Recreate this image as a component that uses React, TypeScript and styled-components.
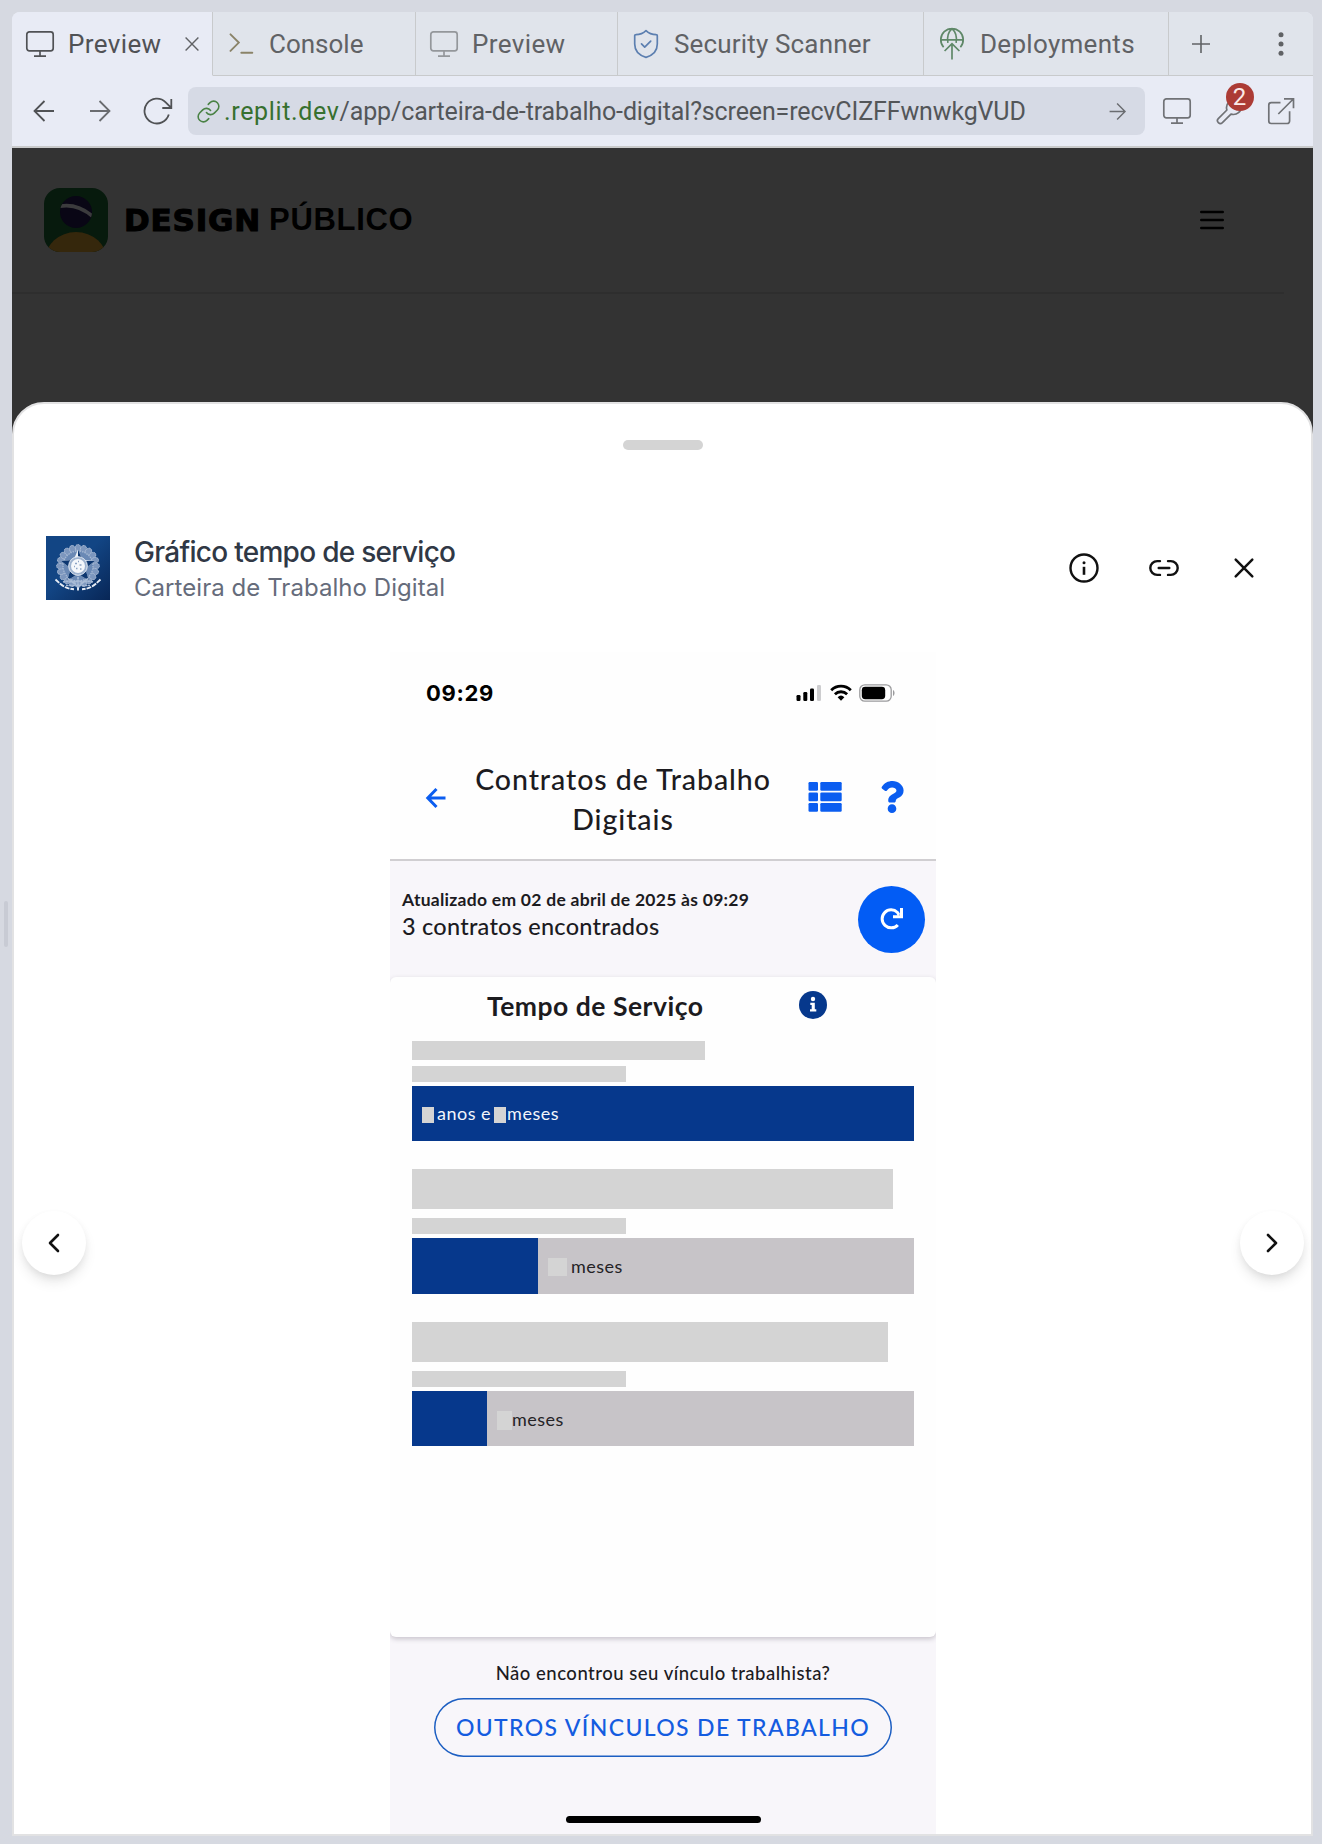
import React from 'react';
import styled, { createGlobalStyle } from 'styled-components';
import { FaQuestion } from 'react-icons/fa';

const Global = createGlobalStyle`
  *, *::before, *::after { box-sizing: border-box; }
  body { margin: 0; background: #d6d9e1; font-family: Inter, "Liberation Sans", sans-serif; }
  svg { display: block; flex: none; }
`;

/* ---------- workspace pane ---------- */

const Workspace = styled.div`
  display: flex;
  width: 1322px;
  height: 1844px;
  padding: 12px 9px 8px 0;
  background: #d6d9e1;
`;

const Gutter = styled.div`
  display: flex;
  align-items: center;
  justify-content: flex-end;
  width: 12px;
  padding: 0 4px 0 0;
`;

const Grip = styled.div`
  width: 4px;
  height: 46px;
  border-radius: 2px;
  background: #c8cbd4;
`;

const Pane = styled.div`
  display: flex;
  flex-direction: column;
  width: 1301px;
  height: 1824px;
  overflow: hidden;
  border-radius: 8px 8px 0 0;
  background: #e8ebf5;
`;

const TabBar = styled.div`
  display: flex;
  height: 64px;
`;

const Tab = styled.div<{ $width: number; $active?: boolean }>`
  display: flex;
  align-items: center;
  width: ${p => p.$width}px;
  padding-left: 13px;
  background: ${p => (p.$active ? '#e8ebf5' : '#e0e4eb')};
  border-right: 1px solid #c8cacc;
  border-bottom: 1px solid ${p => (p.$active ? 'transparent' : '#c8cacc')};
  color: ${p => (p.$active ? '#505255' : '#606265')};
`;

const TabIcon = styled.span`
  display: flex;
  justify-content: center;
  width: 30px;
`;

const TabLabel = styled.span<{ $spacing: number }>`
  flex: 1;
  padding-left: 13px;
  font: 400 26px/32px Roboto, sans-serif;
  letter-spacing: ${p => p.$spacing}px;
  white-space: nowrap;
`;

const TabClose = styled.span`
  padding-right: 13px;
`;

const TabActions = styled.div`
  display: flex;
  flex: 1;
  align-items: center;
  justify-content: space-between;
  padding: 0 28px 0 23px;
  background: #e0e4eb;
  border-bottom: 1px solid #c8cacc;
`;

const Toolbar = styled.div`
  display: flex;
  align-items: center;
  height: 72px;
  padding: 0 18px 0 20px;
  border-bottom: 2px solid #c9cacb;
`;

const NavButtons = styled.div`
  display: flex;
  align-items: center;
  gap: 32px;
  width: 156px;
`;

const Reload = styled.span`
  margin-left: -1px;
`;

const AddressBar = styled.div`
  display: flex;
  align-items: center;
  width: 957px;
  height: 48px;
  padding: 0 18px 0 8px;
  border-radius: 8px;
  background: #d6dae5;
`;

const Address = styled.span`
  flex: 1;
  padding: 2px 0 0 3px;
  font: 400 25px/32px Roboto, sans-serif;
  letter-spacing: -0.13px;
  color: #535659;
  white-space: nowrap;
`;

const Host = styled.span`
  letter-spacing: 0.65px;
  color: #37702f;
`;

const ToolIcons = styled.div`
  display: flex;
  flex: 1;
  align-items: center;
  justify-content: space-between;
  padding-left: 17px;
`;

const BadgeHolder = styled.span`
  position: relative;
`;

const Badge = styled.span`
  position: absolute;
  top: -14px;
  left: 10px;
  width: 28px;
  height: 28px;
  border-radius: 14px;
  background: #ac3b35;
  color: #fbe9e7;
  font: 400 24px/29px Roboto, sans-serif;
  text-align: center;
`;

/* ---------- page behind the sheet ---------- */

const Viewport = styled.div`
  flex: 1;
  background: #333;
`;

const SiteHeader = styled.header`
  display: flex;
  align-items: center;
  width: 1272px;
  height: 146px;
  padding: 0 60px 0 32px;
  border-bottom: 2px solid #2e2e2e;
`;

const Wordmark = styled.div`
  display: flex;
  flex: 1;
  padding-left: 16px;
  color: #000;
  white-space: nowrap;
`;

const WordHeavy = styled.span`
  width: 145px;
  font: 700 31px/40px "DejaVu Sans", sans-serif;
  letter-spacing: 0.8px;
  -webkit-text-stroke: 1.1px #000;
`;

const WordBold = styled.span`
  font: 700 31px/39px "Liberation Sans", sans-serif;
  letter-spacing: 0.7px;
`;

/* ---------- sheet ---------- */

const Sheet = styled.section`
  display: flex;
  flex-direction: column;
  align-items: center;
  height: 1434px;
  margin-top: 108px;
  border: 2px solid #e2e2e3;
  border-radius: 32px 32px 0 0;
  background: #fff;
`;

const DragHandle = styled.div`
  width: 80px;
  height: 10px;
  margin-top: 36px;
  border-radius: 5px;
  background: #d4d4d4;
`;

const SheetHeader = styled.div`
  display: flex;
  align-self: stretch;
  align-items: center;
  height: 64px;
  margin-top: 86px;
  padding: 0 51px 0 32px;
`;

const SheetTitles = styled.div`
  flex: 1;
  padding: 0 0 0 24px;
  margin-top: 5px;
`;

const SheetTitle = styled.h1`
  margin: 0;
  font: 500 28px/35px Inter, sans-serif;
  letter-spacing: -0.71px;
  color: #303845;
`;

const SheetSubtitle = styled.p`
  margin: 0;
  font: 400 24px/36px Inter, sans-serif;
  letter-spacing: 0.05px;
  color: #666c7b;
`;

const SheetActions = styled.div`
  display: flex;
  align-items: center;
  gap: 48px;
`;

const Carousel = styled.div`
  display: flex;
  align-self: stretch;
  justify-content: space-between;
  margin-top: 52px;
  padding: 0 7px 0 8px;
`;

const RoundButton = styled.button`
  display: flex;
  align-items: center;
  justify-content: center;
  width: 64px;
  height: 64px;
  margin-top: 559px;
  padding: 0;
  border: 0;
  border-radius: 50%;
  background: #fff;
  box-shadow: 0 8px 14px -2px rgba(0, 0, 0, 0.11), 0 3px 8px -2px rgba(0, 0, 0, 0.08);
`;

/* ---------- phone capture ---------- */

const Phone = styled.article`
  display: flex;
  flex-direction: column;
  width: 546px;
  height: 1182px;
  overflow: hidden;
  background: #fefefe;
  color: #1c1b1f;
  font-family: Lato, sans-serif;
`;

const StatusBar = styled.div`
  display: flex;
  align-items: center;
  height: 82px;
  padding: 0 40px 0 36px;
`;

const Clock = styled.span`
  flex: 1;
  font: 700 22px/28px Inter, sans-serif;
  letter-spacing: 0.65px;
  color: #000;
`;

const StatusIcons = styled.div`
  display: flex;
  align-items: center;
  gap: 7.5px;
`;

const PhoneNav = styled.div`
  display: flex;
  align-items: center;
  height: 127px;
  padding: 3px 32px 0 35px;
  border-bottom: 2px solid #d0ced1;
`;

const PhoneTitle = styled.h2`
  width: 352px;
  margin: 0;
  padding-top: 2px;
  font: 500 28.5px/40px Lato, sans-serif;
  letter-spacing: 0.92px;
  text-align: center;
  color: #1c1b1f;
`;

const PhoneNavIcons = styled.div`
  display: flex;
  flex: 1;
  align-items: center;
  justify-content: space-between;
  padding: 0 0 3px 9px;
`;

const UpdateStrip = styled.div`
  display: flex;
  align-items: center;
  justify-content: space-between;
  height: 116px;
  padding: 0 11px;
  background: #f8f6fa;
`;

const UpdateText = styled.div`
  padding: 0 0 13px 1px;
`;

const Updated = styled.p`
  margin: 0;
  font: 700 17.5px/27px Lato, sans-serif;
  letter-spacing: 0.27px;
`;

const Found = styled.p`
  margin: 0;
  font: 500 23.5px/27px Lato, sans-serif;
  letter-spacing: 0.24px;
`;

const RefreshButton = styled.button`
  display: flex;
  align-items: center;
  justify-content: center;
  width: 67px;
  height: 67px;
  padding: 0;
  border: 0;
  border-radius: 50%;
  background: #025cf5;
`;

const LowerArea = styled.div`
  flex: 1;
  background: #f8f6fa;
`;

const Card = styled.div`
  height: 660px;
  padding: 12px 22px 0;
  border-radius: 6px;
  background: #fefefe;
  box-shadow: 0 2px 5px rgba(60, 50, 70, 0.26);
`;

const CardHeading = styled.div`
  display: flex;
  align-items: center;
  height: 32px;
  margin-bottom: 20px;
  padding-left: 75px;
`;

const CardTitle = styled.h3`
  width: 312px;
  margin: 0;
  font: 700 26.5px/32px Lato, sans-serif;
  letter-spacing: 0.5px;
  padding-top: 2px;
`;

const Contract = styled.div`
  margin-bottom: 28.4px;
`;

const Redacted = styled.div<{ $w: number; $h: number; $gap: number }>`
  width: ${p => p.$w}px;
  height: ${p => p.$h}px;
  margin-bottom: ${p => p.$gap}px;
  background: #d4d4d4;
`;

const Bar = styled.div`
  display: flex;
  align-items: stretch;
  width: 502px;
  height: 55.3px;
  background: #c7c4c8;
  color: #242226;
`;

const BarFill = styled.div<{ $w: number }>`
  display: flex;
  width: ${p => p.$w}px;
  background: #06388c;
  color: #f2f5fb;
`;

const BarLabel = styled.div`
  display: flex;
  align-items: center;
  padding-left: 10px;
  font: 400 18px/24px Lato, sans-serif;
  letter-spacing: 0.5px;
  white-space: nowrap;
`;

const Blank = styled.span<{ $w: number; $h: number; $left?: number; $right: number }>`
  width: ${p => p.$w}px;
  height: ${p => p.$h}px;
  margin: 3px ${p => p.$right}px 0 ${p => p.$left ?? 0}px;
  background: #d4d4d4;
`;

const Footer = styled.div`
  display: flex;
  flex-direction: column;
  align-items: center;
  padding-top: 24px;
`;

const Question = styled.p`
  margin: 0 0 13px;
  font: 500 18.5px/24px Lato, sans-serif;
  letter-spacing: 0.5px;
`;

const OutlineButton = styled.button`
  width: 458px;
  height: 59px;
  padding: 0;
  border: 0;
  border-radius: 30px;
  background: transparent;
  box-shadow: inset 0 0 0 1.5px #1d5fc2;
  color: #145ce0;
  font: 500 23px/57px Lato, sans-serif;
  letter-spacing: 1.36px;
  white-space: nowrap;
`;

const HomeIndicator = styled.div`
  width: 195px;
  height: 7px;
  margin-top: 59px;
  border-radius: 4px;
  background: #000;
`;

/* ---------- icons ---------- */

const MonitorIcon = ({ color }: { color: string }) => (
  <svg width="30" height="28" viewBox="0 0 30 28" fill="none" stroke={color} strokeWidth="1.7">
    <rect x="1.8" y="1.8" width="26.4" height="19" rx="2.6" />
    <path d="M15 21v5M9 26.2h12" />
  </svg>
);

const CrossIcon = () => (
  <svg width="14" height="14" viewBox="0 0 14 14" stroke="#606265" strokeWidth="1.4">
    <path d="M0.6 0.6l12.8 12.8M13.4 0.6L0.6 13.4" />
  </svg>
);

const ConsoleIcon = () => (
  <svg width="26" height="22" viewBox="0 0 26 22" fill="none" stroke="#8a8368" strokeWidth="1.9" strokeLinecap="round">
    <path d="M2.5 1.3l8.300 8.300-8.300 8.300M13.300 19.800h11" />
  </svg>
);

const ShieldIcon = () => (
  <svg width="26" height="30" viewBox="0 0 26 30" fill="none" stroke="#5c7fb0" strokeWidth="1.7" strokeLinejoin="round" strokeLinecap="round">
    <path d="M13 1.6c-2.6 2.6-6 4-10.2 4.1-.8 0-1.1.4-1.1 1.1v8.3c0 6.700 4.400 11.300 11.300 13.300 6.900-2 11.300-6.600 11.300-13.300V6.800c0-.7-.3-1.100-1.100-1.100C19 5.600 15.600 4.200 13 1.600z" />
    <path d="M8.500 14.900l3.200 3.200 6-6" />
  </svg>
);

const DeployIcon = () => (
  <svg width="26" height="34" viewBox="0 0 26 34" fill="none" stroke="#5f8868" strokeWidth="1.7">
    <path d="M4.600 20.200A11.200 11.200 0 1 1 21.400 20.200M1.800 12.800h22.400M8.900 15.800c-1-5.600.5-11 4.100-14.200 3.600 3.200 5.100 8.600 4.100 14.200M13 32.500V17M5.600 24L13 16.600l7.400 7.400" />
  </svg>
);

const PlusIcon = () => (
  <svg width="18" height="18" viewBox="0 0 18 18" stroke="#606265" strokeWidth="1.6">
    <path d="M0 9h18M9 0v18" />
  </svg>
);

const DotsIcon = () => (
  <svg width="8" height="26" viewBox="0 0 8 26" fill="#606265">
    <circle cx="4" cy="3.700" r="2.500" />
    <circle cx="4" cy="13" r="2.500" />
    <circle cx="4" cy="22.300" r="2.500" />
  </svg>
);

const ArrowIcon = ({ size, color, flip }: { size: number; color: string; flip?: boolean }) => (
  <svg width={size} height={size} viewBox="0 0 24 24" fill="none" stroke={color} strokeWidth="1.8">
    <path d={flip ? 'M22 12H2.500M12.500 2L2.500 12l10 10' : 'M2 12h19.500M11.500 2l10 10-10 10'} />
  </svg>
);

const ReloadIcon = () => (
  <svg width="30" height="28" viewBox="0 0 30 28" fill="none" stroke="#505255" strokeWidth="1.8">
    <path d="M25.800 17.600A12.400 12.400 0 1 1 22.700 5.300L28 10.600M28.300 2v9h-9" />
  </svg>
);

const ChainIcon = () => (
  <svg width="25" height="25" viewBox="0 0 24 24" fill="none" stroke="#4a8245" strokeWidth="1.5" strokeLinecap="round">
    <path d="M10 13a5 5 0 0 0 7.540.540l3-3a5 5 0 0 0-7.070-7.070l-1.720 1.710M14 11a5 5 0 0 0-7.540-.540l-3 3a5 5 0 0 0 7.070 7.070l1.710-1.710" />
  </svg>
);

const WrenchIcon = () => (
  <svg width="28" height="28" viewBox="0 0 28 28" fill="none" stroke="#707276" strokeWidth="1.7" strokeLinejoin="round">
    <path d="M25.300 8.400a8 8 0 0 1-10.300 8.700l-8.600 8.600a2.900 2.900 0 0 1-4.100-4.100l8.600-8.600A8 8 0 0 1 20.500 2.900l-4.600 4.600 4.600 4.800z" />
  </svg>
);

const ExternalIcon = () => (
  <svg width="28" height="28" viewBox="0 0 28 28" fill="none" stroke="#707276" strokeWidth="1.700">
    <path d="M13.500 5.700H4.200a2.400 2.400 0 0 0-2.400 2.400v16a2.400 2.400 0 0 0 2.400 2.400h16a2.400 2.400 0 0 0 2.400-2.400v-9.800M11.300 17L26.300 2M17 1.800h9.500v9.500" />
  </svg>
);

const SiteLogo = () => (
  <svg width="64" height="64" viewBox="0 0 64 64">
    <defs>
      <clipPath id="tile"><rect width="64" height="64" rx="16" /></clipPath>
      <clipPath id="globe"><circle cx="32" cy="24" r="16" /></clipPath>
    </defs>
    <g clipPath="url(#tile)">
      <rect width="64" height="64" fill="#071a0d" />
      <circle cx="32" cy="24" r="16" fill="#090615" />
      <path clipPath="url(#globe)" d="M14 18.600C27 15.500 39 19.500 50 29.500" fill="none" stroke="#3b3b3d" strokeWidth="3.600" />
      <ellipse cx="32" cy="72" rx="31" ry="28" fill="#35270c" />
    </g>
  </svg>
);

const MenuIcon = () => (
  <svg width="24" height="20" viewBox="0 0 24 20" stroke="#000" strokeWidth="2.600" strokeLinecap="round">
    <path d="M1.300 2h21.400M1.300 10h21.400M1.300 18h21.400" />
  </svg>
);

const petals = Array.from({ length: 20 }, (_, i) => (i * Math.PI) / 10);

const CoatOfArms = () => (
  <svg width="64" height="64" viewBox="0 0 64 64">
    <defs>
      <linearGradient id="field" x1="0" y1="0" x2="1" y2="1">
        <stop offset="0.450" stopColor="#124584" />
        <stop offset="1" stopColor="#082656" />
      </linearGradient>
    </defs>
    <rect width="64" height="64" fill="url(#field)" />
    {petals.map(a => (
      <ellipse
        key={a}
        cx={32 + 17.500 * Math.sin(a)}
        cy={30 - 17.500 * Math.cos(a)}
        rx="3"
        ry="4"
        fill="#7d97be"
        stroke="#b4c3da"
        strokeWidth="0.800"
        strokeDasharray="1.500 0.500"
        transform={`rotate(${(a * 180) / Math.PI} ${32 + 17.500 * Math.sin(a)} ${30 - 17.500 * Math.cos(a)})`}
      />
    ))}
    <circle cx="32" cy="30" r="15" fill="#6a89b5" stroke="#a5b8d3" strokeWidth="1.300" strokeDasharray="1.400 1" />
    <path d="M32 13.500l4.400 10.400 12.400 1-9.600 7.700 3.700 11.900-10.900-6.500-10.900 6.500 3.700-11.900-9.600-7.700 12.400-1z" fill="#edf2f8" />
    <path d="M32 13.500v11l4.400-.6zM48.800 24.900l-9.600 7.700-2.800-7.700zM42.900 44.500L32 38l7.200-5.400zM21.100 44.500l3.700-11.900L32 38zM15.200 24.900l12.400-1-2.800 8.700z" fill="#0d3770" />
    <circle cx="32" cy="30" r="9.300" fill="#9db2cf" stroke="#e3eaf3" strokeWidth="1" />
    <circle cx="32" cy="30" r="7" fill="#f4f7fb" />
    <path d="M29 27.500h2M33.500 29h2M30 32.500h1.500M34 33h1.500M32 25.500h1M28 30.500h1" stroke="#8ca4c5" strokeWidth="1.300" />
    <path d="M17 46c5-1.500 9-.5 12 2M47 46c-5-1.500-9-.5-12 2M22 42.500l8 6M42 42.500l-8 6M20 49.500h24M24 45.500h16M32 41v12" stroke="#a9bcd6" strokeWidth="1.700" fill="none" strokeDasharray="2.600 0.500" />
    <path d="M9.500 43.500l5 4.600c4 3.300 8 4.700 13.500 5.200M54.500 43.500l-5 4.600c-4 3.300-8 4.700-13.500 5.200M32 51.500v3" stroke="#e7edf5" strokeWidth="1.900" fill="none" strokeDasharray="5 1" />
  </svg>
);

const InfoOutlineIcon = () => (
  <svg width="32" height="32" viewBox="0 0 32 32" fill="none" stroke="#111">
    <circle cx="16" cy="16" r="13.500" strokeWidth="2.400" />
    <path d="M16 14.800v8" strokeWidth="2.600" />
    <circle cx="16" cy="10.700" r="1.500" fill="#111" stroke="none" />
  </svg>
);

const LinkPillIcon = () => (
  <svg width="32" height="32" viewBox="0 0 32 32" fill="none" stroke="#111" strokeWidth="2.400" strokeLinecap="round">
    <path d="M12 9.100H9.200a6.900 6.900 0 0 0 0 13.800H12M20 9.100h2.800a6.900 6.900 0 0 1 0 13.800H20M10.700 16h10.600" />
  </svg>
);

const CloseIcon = () => (
  <svg width="32" height="32" viewBox="0 0 32 32" stroke="#111" strokeWidth="2.500" strokeLinecap="round">
    <path d="M7.700 7.700l16.600 16.600M24.300 7.700L7.700 24.300" />
  </svg>
);

const ChevronIcon = ({ right }: { right?: boolean }) => (
  <svg width="20" height="22" viewBox="0 0 20 22" fill="none" stroke="#111" strokeWidth="2.600" strokeLinecap="round" strokeLinejoin="round">
    <path d={right ? 'M6 3l8 8-8 8' : 'M14 3l-8 8 8 8'} />
  </svg>
);

const SignalIcon = () => (
  <svg width="26" height="18" viewBox="0 0 26 18">
    <rect x="0.500" y="11" width="4" height="6" rx="1.200" />
    <rect x="7.300" y="8" width="4" height="9" rx="1.200" />
    <rect x="14" y="4.500" width="4" height="12.500" rx="1.200" />
    <rect x="21" y="1" width="4" height="16" rx="1.200" fill="#cdcdcf" />
  </svg>
);

const WifiIcon = () => (
  <svg width="22" height="18" viewBox="0 0 22 18" fill="none" stroke="#000" strokeWidth="2.800">
    <path d="M1.200 6.200a14 14 0 0 1 19.600 0M4.900 10.200a8.800 8.800 0 0 1 12.200 0" />
    <path d="M7.600 13.200a5 5 0 0 1 6.800 0L11 16.800z" fill="#000" stroke="none" />
  </svg>
);

const BatteryIcon = () => (
  <svg width="37" height="18" viewBox="0 0 37 18">
    <rect x="0.800" y="0.800" width="31.400" height="16.400" rx="5" fill="none" stroke="#9b9b9d" strokeWidth="1.300" />
    <rect x="2.800" y="2.800" width="23.400" height="12.400" rx="3.400" />
    <path d="M34 6v6c2-1 2-5 0-6z" fill="#9b9b9d" />
  </svg>
);

const BackIcon = () => (
  <svg width="22" height="22" viewBox="0 0 22 22" fill="none" stroke="#0b5df0" strokeWidth="3">
    <path d="M20.500 11H3M11.500 2L2.800 11l8.700 9" />
  </svg>
);

const ListIcon = () => (
  <svg width="34" height="30" viewBox="0 0 34 30" fill="#0b5df0">
    {[0, 10.500, 21].map(y => (
      <g key={y}>
        <rect x="0.500" y={y} width="9.500" height="8.700" rx="1.200" />
        <rect x="12.300" y={y} width="21.400" height="8.700" rx="1.200" />
      </g>
    ))}
  </svg>
);

const HelpIcon = styled(FaQuestion)`
  width: 24px;
  height: 34px;
  color: #0b5df0;
`;

const RefreshIcon = () => (
  <svg width="24" height="24" viewBox="0 0 24 24" fill="none" stroke="#fff" strokeWidth="3">
    <path d="M17.800 17.900A9 9 0 1 1 17.500 5.500L19 8M21.500 1v8.700h-8.500" />
  </svg>
);

const InfoSolidIcon = () => (
  <svg width="28" height="28" viewBox="0 0 28 28">
    <circle cx="14" cy="14" r="14" fill="#06388c" />
    <circle cx="14" cy="8" r="2.200" fill="#fff" />
    <path d="M11.300 11.800h4.500v6.500h1.500v2.300h-6.300v-2.300h1.700v-4.200h-1.400z" fill="#fff" />
  </svg>
);

/* ---------- page ---------- */

export default function App() {
  return (
    <Workspace>
      <Global />
      <Gutter><Grip /></Gutter>
      <Pane>
        <TabBar>
          <Tab $width={201} $active>
            <TabIcon><MonitorIcon color="#505255" /></TabIcon>
            <TabLabel $spacing={0.38}>Preview</TabLabel>
            <TabClose><CrossIcon /></TabClose>
          </Tab>
          <Tab $width={203}>
            <TabIcon><ConsoleIcon /></TabIcon>
            <TabLabel $spacing={0}>Console</TabLabel>
          </Tab>
          <Tab $width={202}>
            <TabIcon><MonitorIcon color="#94979b" /></TabIcon>
            <TabLabel $spacing={0.38}>Preview</TabLabel>
          </Tab>
          <Tab $width={306}>
            <TabIcon><ShieldIcon /></TabIcon>
            <TabLabel $spacing={0.16}>Security Scanner</TabLabel>
          </Tab>
          <Tab $width={245}>
            <TabIcon><DeployIcon /></TabIcon>
            <TabLabel $spacing={0.3}>Deployments</TabLabel>
          </Tab>
          <TabActions>
            <PlusIcon />
            <DotsIcon />
          </TabActions>
        </TabBar>
        <Toolbar>
          <NavButtons>
            <ArrowIcon size={24} color="#505255" flip />
            <ArrowIcon size={24} color="#6a6c70" />
            <Reload><ReloadIcon /></Reload>
          </NavButtons>
          <AddressBar>
            <ChainIcon />
            <Address><Host>.replit.dev</Host>/app/carteira-de-trabalho-digital?screen=recvCIZFFwnwkgVUD</Address>
            <ArrowIcon size={19} color="#6a6c70" />
          </AddressBar>
          <ToolIcons>
            <MonitorIcon color="#707276" />
            <BadgeHolder>
              <WrenchIcon />
              <Badge>2</Badge>
            </BadgeHolder>
            <ExternalIcon />
          </ToolIcons>
        </Toolbar>
        <Viewport>
          <SiteHeader>
            <SiteLogo />
            <Wordmark>
              <WordHeavy>DESIGN</WordHeavy>
              <WordBold>PÚBLICO</WordBold>
            </Wordmark>
            <MenuIcon />
          </SiteHeader>
          <Sheet>
            <DragHandle />
            <SheetHeader>
              <CoatOfArms />
              <SheetTitles>
                <SheetTitle>Gráfico tempo de serviço</SheetTitle>
                <SheetSubtitle>Carteira de Trabalho Digital</SheetSubtitle>
              </SheetTitles>
              <SheetActions>
                <InfoOutlineIcon />
                <LinkPillIcon />
                <CloseIcon />
              </SheetActions>
            </SheetHeader>
            <Carousel>
              <RoundButton><ChevronIcon /></RoundButton>
              <Phone>
                <StatusBar>
                  <Clock>09:29</Clock>
                  <StatusIcons>
                    <SignalIcon />
                    <WifiIcon />
                    <BatteryIcon />
                  </StatusIcons>
                </StatusBar>
                <PhoneNav>
                  <BackIcon />
                  <PhoneTitle>Contratos de Trabalho<br />Digitais</PhoneTitle>
                  <PhoneNavIcons>
                    <ListIcon />
                    <HelpIcon />
                  </PhoneNavIcons>
                </PhoneNav>
                <UpdateStrip>
                  <UpdateText>
                    <Updated>Atualizado em 02 de abril de 2025 às 09:29</Updated>
                    <Found>3 contratos encontrados</Found>
                  </UpdateText>
                  <RefreshButton><RefreshIcon /></RefreshButton>
                </UpdateStrip>
                <LowerArea>
                  <Card>
                    <CardHeading>
                      <CardTitle>Tempo de Serviço</CardTitle>
                      <InfoSolidIcon />
                    </CardHeading>
                    <Contract>
                      <Redacted $w={293} $h={18.5} $gap={6.5} />
                      <Redacted $w={214} $h={16} $gap={3.6} />
                      <Bar>
                        <BarFill $w={502}>
                          <BarLabel>
                            <Blank $w={12} $h={16} $right={3} />
                            anos e
                            <Blank $w={12} $h={16} $left={3} $right={1} />
                            meses
                          </BarLabel>
                        </BarFill>
                      </Bar>
                    </Contract>
                    <Contract>
                      <Redacted $w={481} $h={39.5} $gap={9.5} />
                      <Redacted $w={214} $h={16} $gap={4} />
                      <Bar>
                        <BarFill $w={126} />
                        <BarLabel>
                          <Blank $w={19} $h={18} $right={4} />
                          meses
                        </BarLabel>
                      </Bar>
                    </Contract>
                    <Contract>
                      <Redacted $w={475.500} $h={40} $gap={9} />
                      <Redacted $w={214} $h={16} $gap={4} />
                      <Bar>
                        <BarFill $w={75} />
                        <BarLabel>
                          <Blank $w={15} $h={19} $right={0} />
                          meses
                        </BarLabel>
                      </Bar>
                    </Contract>
                  </Card>
                  <Footer>
                    <Question>Não encontrou seu vínculo trabalhista?</Question>
                    <OutlineButton>OUTROS VÍNCULOS DE TRABALHO</OutlineButton>
                    <HomeIndicator />
                  </Footer>
                </LowerArea>
              </Phone>
              <RoundButton><ChevronIcon right /></RoundButton>
            </Carousel>
          </Sheet>
        </Viewport>
      </Pane>
    </Workspace>
  );
}
